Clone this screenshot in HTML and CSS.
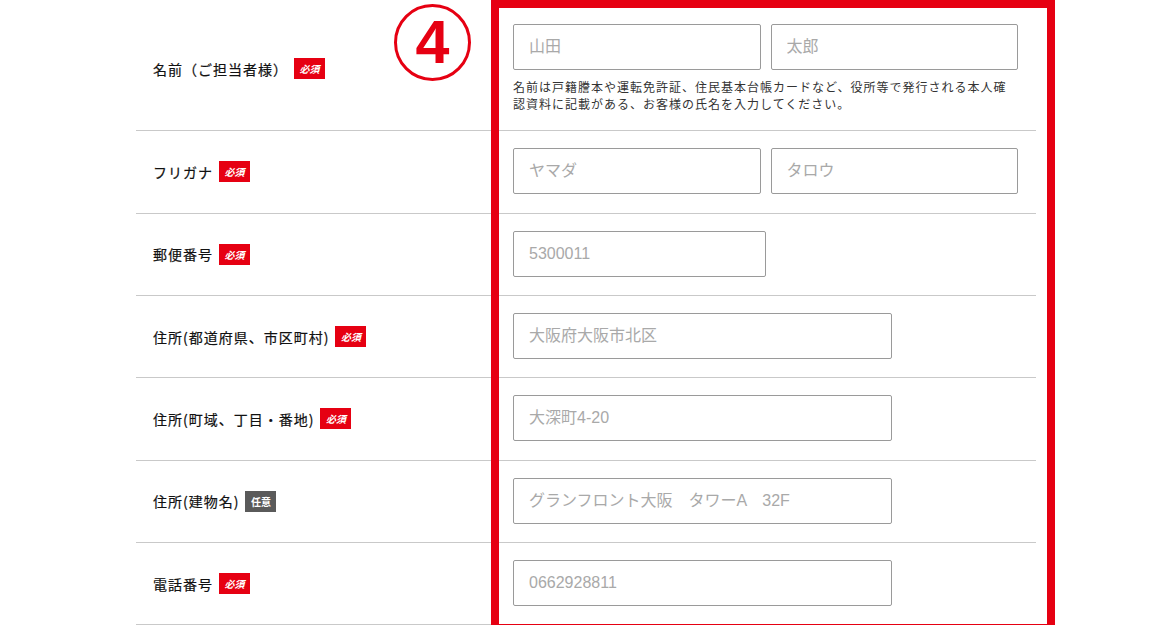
FILE: index.html
```html
<!DOCTYPE html>
<html lang="ja">
<head>
<meta charset="utf-8">
<title>お客様情報入力</title>
<link rel="stylesheet" href="styles.css">
</head>
<body>
<div class="form">
  <div class="row row-first">
    <div class="label"><span class="text">名前（ご担当者様）</span><span class="badge req">必須</span></div>
    <div class="field">
      <div class="pair">
        <input class="input" type="text" placeholder="山田">
        <input class="input" type="text" placeholder="太郎">
      </div>
      <p class="note">名前は戸籍謄本や運転免許証、住民基本台帳カードなど、役所等で発行される本人確認資料に記載がある、お客様の氏名を入力してください。</p>
    </div>
  </div>
  <div class="row">
    <div class="label"><span class="text">フリガナ</span><span class="badge req">必須</span></div>
    <div class="field">
      <div class="pair">
        <input class="input" type="text" placeholder="ヤマダ">
        <input class="input" type="text" placeholder="タロウ">
      </div>
    </div>
  </div>
  <div class="row">
    <div class="label"><span class="text">郵便番号</span><span class="badge req">必須</span></div>
    <div class="field">
      <input class="input half" type="text" placeholder="5300011">
    </div>
  </div>
  <div class="row">
    <div class="label"><span class="text">住所(都道府県、市区町村)</span><span class="badge req">必須</span></div>
    <div class="field">
      <input class="input wide" type="text" placeholder="大阪府大阪市北区">
    </div>
  </div>
  <div class="row">
    <div class="label"><span class="text">住所(町域、丁目・番地)</span><span class="badge req">必須</span></div>
    <div class="field">
      <input class="input wide" type="text" placeholder="大深町4-20">
    </div>
  </div>
  <div class="row">
    <div class="label"><span class="text">住所(建物名)</span><span class="badge opt">任意</span></div>
    <div class="field">
      <input class="input wide" type="text" placeholder="グランフロント大阪　タワーA　32F">
    </div>
  </div>
  <div class="row">
    <div class="label"><span class="text">電話番号</span><span class="badge req">必須</span></div>
    <div class="field">
      <input class="input wide" type="text" placeholder="0662928811">
    </div>
  </div>

  <div class="highlight"></div>
  <div class="step"><span class="step-num">4</span></div>
</div>
</body>
</html>
```

FILE: styles.css
```css
html, body {
  margin: 0;
  padding: 0;
  background: #ffffff;
}

body {
  padding-top: 7px;
  font-family: "Liberation Sans", "Noto Sans CJK JP", sans-serif;
  color: #222;
}

.form {
  position: relative;
  width: 900px;
  margin: 0 auto;
}

.row {
  display: grid;
  grid-template-columns: 377px 1fr;
  border-bottom: 1px solid #c9c9c9;
}

.label {
  display: flex;
  align-items: center;
  padding-left: 17px;
}

.text {
  font-family: "Noto Sans CJK JP", sans-serif;
  font-size: 14px;
  letter-spacing: 1px;
  color: #111;
  font-weight: 400;
  -webkit-text-stroke: 0.2px #111;
}

.badge {
  display: inline-flex;
  align-items: center;
  justify-content: center;
  width: 31px;
  height: 21px;
  margin-left: 6px;
  font-family: "Noto Sans CJK JP", sans-serif;
  font-size: 10px;
  font-weight: 700;
  color: #fff;
  letter-spacing: 0;
}

.badge.req {
  background: #e60012;
  font-style: italic;
}

.badge.opt {
  background: #5a5a5a;
}

.field {
  padding: 17px 18px 18.33px 0;
}

.pair {
  display: flex;
  gap: 10px;
}

.pair .input {
  flex: 1 1 0;
  min-width: 0;
}

.input {
  display: block;
  box-sizing: border-box;
  height: 46px;
  margin: 0;
  padding: 0 15px;
  border: 1px solid #9a9a9a;
  border-radius: 2px;
  background: #fff;
  font-family: "Liberation Sans", "Noto Sans CJK JP", sans-serif;
  font-size: 16px;
  color: #333;
  outline: none;
}

.input::placeholder {
  color: #a9a9a9;
  opacity: 1;
}

.input.half {
  width: 50%;
}

.input.wide {
  width: 75%;
}

.note {
  margin: 8px 0 0;
  font-family: "Noto Sans CJK JP", sans-serif;
  font-size: 12px;
  line-height: 17px;
  letter-spacing: 1px;
  color: #333;
}

.highlight {
  position: absolute;
  left: 355px;
  top: -7px;
  width: 564px;
  height: 632px;
  box-sizing: border-box;
  border: 8px solid #e60012;
  pointer-events: none;
}

.step {
  position: absolute;
  left: 258px;
  top: -3px;
  width: 77px;
  height: 77px;
  box-sizing: border-box;
  border: 3px solid #e60012;
  border-radius: 50%;
  display: flex;
  align-items: center;
  justify-content: center;
}

.step-num {
  font-family: "Liberation Sans", sans-serif;
  font-weight: 700;
  font-size: 61px;
  line-height: 1;
  color: #e60012;
}
```
